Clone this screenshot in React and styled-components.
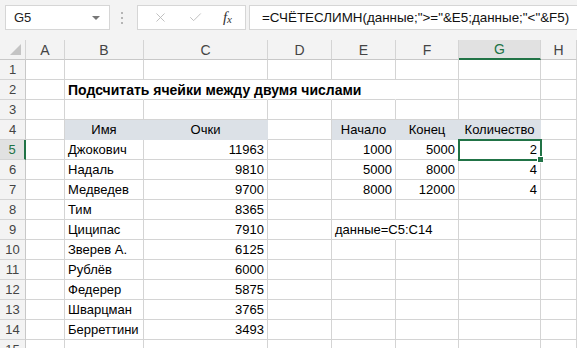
import React from 'react';
import styled, { createGlobalStyle, css } from 'styled-components';
import { X, Check } from 'lucide-react';

const GREEN = '#217346';
const GRID = '#d4d4d4';
const BAND = '#dce1e7';

const GlobalStyle = createGlobalStyle`
    html, body {
        margin: 0;
        padding: 0;
        background: #fff;
        overflow: hidden;
    }
    body {
        font-family: "Liberation Sans", Arial, sans-serif;
        color: #000;
    }
`;

const Window = styled.div`
    width: 577px;
    height: 348px;
    overflow: hidden;
    background: #fff;
`;

const Toolbar = styled.div`
    display: flex;
    align-items: flex-start;
    height: 40px;
    padding-top: 5px;
    box-sizing: border-box;
    background: #f3f3f3;
`;

const NameBox = styled.div`
    display: flex;
    align-items: center;
    justify-content: space-between;
    width: 105px;
    height: 25px;
    margin-left: 5px;
    padding: 0 9px 0 8px;
    box-sizing: border-box;
    background: #fff;
    border: 1px solid #d6d6d6;
    font-size: 13px;
    color: #222;
`;

const Arrow = styled.span`
    width: 0;
    height: 0;
    border-left: 4px solid transparent;
    border-right: 4px solid transparent;
    border-top: 4px solid #777;
`;

const Dots = styled.div`
    display: flex;
    flex-direction: column;
    justify-content: space-between;
    width: 2px;
    height: 12px;
    margin: 7px 14px 0 11px;
    span {
        display: block;
        width: 2px;
        height: 2px;
        background: #b5b5b5;
    }
`;

const ButtonBox = styled.div`
    display: flex;
    align-items: center;
    justify-content: space-between;
    width: 109px;
    height: 25px;
    padding: 0 13px 0 15px;
    box-sizing: border-box;
    background: #fff;
    border: 1px solid #d6d6d6;
    color: #b8b8b8;
`;

const Fx = styled.span`
    font-family: "Liberation Serif", "Times New Roman", serif;
    font-style: italic;
    font-size: 15px;
    color: #333;
    sub {
        font-size: 11px;
        vertical-align: -1px;
    }
`;

const FormulaInput = styled.div`
    flex: 1;
    height: 25px;
    margin-left: 3px;
    padding-left: 12px;
    box-sizing: border-box;
    background: #fff;
    border: 1px solid #d6d6d6;
    border-right: none;
    font-size: 13.4px;
    line-height: 23px;
    white-space: nowrap;
    color: #111;
`;

const Sheet = styled.div`
    display: grid;
    grid-template-columns: 26px 39px 79px 124px 64px 64px 63px 82px 1fr;
    grid-auto-rows: 20px;
`;

const HeadCell = styled.div`
    display: flex;
    align-items: center;
    justify-content: center;
    box-sizing: border-box;
    background: ${p => (p.$active ? '#e1e1e1' : '#f3f3f3')};
    border-right: 1px solid ${GRID};
    border-bottom: ${p => (p.$active ? `2px solid ${GREEN}` : `1px solid #c8c8c8`)};
    font-size: 14px;
    color: ${p => (p.$active ? GREEN : '#444')};
`;

const Corner = styled(HeadCell)`
    position: relative;
    &::after {
        content: '';
        position: absolute;
        right: 4px;
        bottom: 4px;
        width: 0;
        height: 0;
        border-left: 11px solid transparent;
        border-bottom: 11px solid #c4c4c4;
    }
`;

const RowHead = styled.div`
    display: flex;
    align-items: center;
    justify-content: center;
    box-sizing: border-box;
    background: ${p => (p.$active ? '#e1e1e1' : '#f3f3f3')};
    border-bottom: 1px solid ${GRID};
    border-right: ${p => (p.$active ? `2px solid ${GREEN}` : `1px solid #c8c8c8`)};
    font-size: 13px;
    color: ${p => (p.$active ? GREEN : '#444')};
`;

const Cell = styled.div`
    display: flex;
    align-items: center;
    justify-content: ${p => (p.$align === 'right' ? 'flex-end' : p.$align === 'center' ? 'center' : 'flex-start')};
    padding: 0 3px;
    box-sizing: border-box;
    border-right: 1px solid ${p => (p.$overflow ? 'transparent' : p.$band ? BAND : GRID)};
    border-bottom: 1px solid ${p => (p.$band ? BAND : GRID)};
    background: ${p => (p.$band ? BAND : 'transparent')};
    font-size: ${p => (p.$bold ? '14px' : '13px')};
    font-weight: ${p => (p.$bold ? 700 : 400)};
    white-space: nowrap;
    overflow: visible;
    position: relative;
    ${p => p.$selected && css`
        z-index: 2;
        outline: 2px solid ${GREEN};
        outline-offset: -1px;
        &::after {
            content: '';
            position: absolute;
            right: -4px;
            bottom: -4px;
            width: 5px;
            height: 5px;
            background: ${GREEN};
            border: 1px solid #fff;
        }
    `}
`;

const columns = ['A', 'B', 'C', 'D', 'E', 'F', 'G', 'H'];

const players = [
    ['Джокович', '11963'],
    ['Надаль', '9810'],
    ['Медведев', '9700'],
    ['Тим', '8365'],
    ['Циципас', '7910'],
    ['Зверев А.', '6125'],
    ['Рублёв', '6000'],
    ['Федерер', '5875'],
    ['Шварцман', '3765'],
    ['Берреттини', '3493'],
];

const ranges = [
    ['1000', '5000', '2'],
    ['5000', '8000', '4'],
    ['8000', '12000', '4'],
];

const blank = () => ({});

const buildRow = r => {
    const cells = columns.map(blank);
    if (r === 2) {
        cells[1] = { text: 'Подсчитать ячейки между двумя числами', bold: true, overflow: true };
        cells[2] = { overflow: true };
        cells[3] = { overflow: true };
        cells[4] = { overflow: true };
    }
    if (r === 4) {
        cells[1] = { text: 'Имя', align: 'center', band: true };
        cells[2] = { text: 'Очки', align: 'center', band: true };
        cells[4] = { text: 'Начало', align: 'center', band: true };
        cells[5] = { text: 'Конец', align: 'center', band: true };
        cells[6] = { text: 'Количество', align: 'center', band: true };
    }
    if (r >= 5 && r <= 14) {
        const [name, score] = players[r - 5];
        cells[1] = { text: name };
        cells[2] = { text: score, align: 'right' };
    }
    if (r >= 5 && r <= 7) {
        const [from, to, count] = ranges[r - 5];
        cells[4] = { text: from, align: 'right' };
        cells[5] = { text: to, align: 'right' };
        cells[6] = { text: count, align: 'right', selected: r === 5 };
    }
    if (r === 9) {
        cells[4] = { text: 'данные=C5:C14', overflow: true };
    }
    return cells;
};

const rows = Array.from({ length: 15 }, (_, i) => i + 1);

export default function App() {
    return (
        <Window>
            <GlobalStyle />
            <Toolbar>
                <NameBox>
                    G5
                    <Arrow />
                </NameBox>
                <Dots>
                    <span />
                    <span />
                    <span />
                </Dots>
                <ButtonBox>
                    <X size={15} strokeWidth={1.4} />
                    <Check size={15} strokeWidth={1.4} />
                    <Fx>
                        f<sub>x</sub>
                    </Fx>
                </ButtonBox>
                <FormulaInput>=СЧЁТЕСЛИМН(данные;"&gt;="&amp;E5;данные;"&lt;"&amp;F5)</FormulaInput>
            </Toolbar>
            <Sheet>
                <Corner />
                {columns.map(col => (
                    <HeadCell key={col} $active={col === 'G'}>
                        {col}
                    </HeadCell>
                ))}
                {rows.map(r => (
                    <React.Fragment key={r}>
                        <RowHead $active={r === 5}>{r}</RowHead>
                        {buildRow(r).map((c, i) => (
                            <Cell
                                key={i}
                                $align={c.align}
                                $band={c.band}
                                $bold={c.bold}
                                $overflow={c.overflow}
                                $selected={c.selected}
                            >
                                {c.text}
                            </Cell>
                        ))}
                    </React.Fragment>
                ))}
            </Sheet>
        </Window>
    );
}
